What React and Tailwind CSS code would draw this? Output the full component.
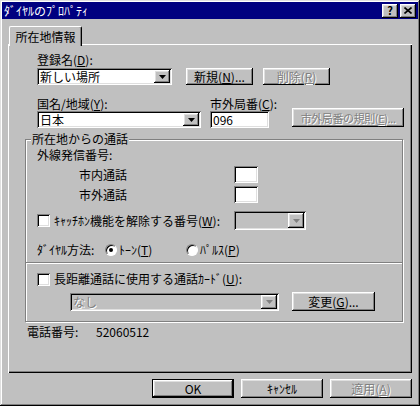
import React from "react";

const raised = "shadow-[inset_-1px_-1px_#000,inset_1px_1px_#fff,inset_-2px_-2px_#808080,inset_2px_2px_#dfdfdf]";
const sunken = "shadow-[inset_1px_1px_#808080,inset_-1px_-1px_#fff,inset_2px_2px_#000,inset_-2px_-2px_#dfdfdf]";
const dim = "text-[#808080] [text-shadow:1px_1px_0_#fff]";

const Arrow = ({ off }) => (
  <svg width="7" height="4" viewBox="0 0 7 4">
    <path d="M0 0h7L3.5 4z" fill={off ? "#808080" : "#000"} />
  </svg>
);

const Combo = ({ className, text, off }) => (
  <div className={`flex items-center p-[2px] ${sunken} ${off ? "bg-[#c0c0c0]" : "bg-white"} ${className}`}>
    <span className={`flex-1 pl-[1px] whitespace-nowrap ${off ? dim : ""}`}>{text}</span>
    <div className={`h-full w-[16px] bg-[#c0c0c0] flex items-center justify-center ${raised}`}>
      <Arrow off={off} />
    </div>
  </div>
);

const Field = ({ className, text }) => (
  <div className={`bg-white flex items-center pl-[3px] ${sunken} ${className}`}>{text}</div>
);

const Btn = ({ className, children, off, def }) => (
  <div
    className={`flex items-center justify-center bg-[#c0c0c0] whitespace-nowrap ${raised} ${off ? dim : ""} ${def ? "border border-black" : ""} ${className}`}
  >
    {children}
  </div>
);

const Check = () => <div className={`w-[13px] h-[13px] bg-white shrink-0 ${sunken}`} />;

const Radio = ({ on }) => (
  <div className="w-[12px] h-[12px] rounded-full bg-white border border-t-[#808080] border-l-[#808080] border-b-white border-r-white shadow-[inset_1px_1px_#000] flex items-center justify-center shrink-0">
    {on && <div className="w-[4px] h-[4px] rounded-full bg-black" />}
  </div>
);

export default function App() {
  return (
    <div className="w-[420px] h-[406px] bg-[#c0c0c0] p-[2px] flex flex-col font-['Noto_Sans_CJK_JP',sans-serif] text-[12px] leading-[14px] text-black shadow-[inset_-1px_-1px_#000,inset_1px_1px_#dfdfdf,inset_-2px_-2px_#808080,inset_2px_2px_#fff]">
      {/* title bar */}
      <div className="h-[17px] shrink-0 bg-[#000080] flex items-center justify-between pl-[2px] pr-[2px]">
        <span className="text-white">ﾀﾞｲﾔﾙのﾌﾟﾛﾊﾟﾃｨ</span>
        <div className="flex gap-[2px]">
          <div className={`w-[16px] h-[14px] bg-[#c0c0c0] flex items-center justify-center font-bold text-[11px] leading-none ${raised}`}>
            ?
          </div>
          <div className={`w-[16px] h-[14px] bg-[#c0c0c0] flex items-center justify-center ${raised}`}>
            <svg width="8" height="7" viewBox="0 0 8 7">
              <path d="M0.5 0.5L7.5 6.5M7.5 0.5L0.5 6.5" stroke="#000" strokeWidth="1.6" />
            </svg>
          </div>
        </div>
      </div>

      {/* tab */}
      <div className="mt-[7px] ml-[7px] relative z-10 -mb-[2px] w-[73px] h-[20px] bg-[#c0c0c0] border-t border-l border-white border-r border-r-black rounded-t-[2px] shadow-[inset_-1px_0_#808080] flex items-center justify-center">
        所在地情報
      </div>

      {/* panel */}
      <div className="ml-[6px] w-[404px] h-[329px] shrink-0 flex flex-col pl-[17px] pt-[9px] shadow-[inset_1px_1px_#fff,inset_-1px_-1px_#000,inset_-2px_-2px_#808080]">
        <div className="ml-[12px]">
          <div>
            登録名(<u>D</u>):
          </div>
          <div className="mt-[1px] flex">
            <Combo className="w-[135px] h-[17px]" text="新しい場所" />
            <Btn className="ml-[14px] w-[67px] h-[17px]">
              新規(<u>N</u>)...
            </Btn>
            <Btn off className="ml-[10px] w-[67px] h-[17px]">
              削除(<u>R</u>)
            </Btn>
          </div>

          <div className="mt-[12px] flex items-start">
            <div className="flex flex-col w-[164px]">
              <span>
                国名/地域(<u>Y</u>):
              </span>
              <Combo className="w-[164px] h-[17px]" text="日本" />
            </div>
            <div className="flex flex-col ml-[9px]">
              <span>
                市外局番(<u>C</u>):
              </span>
              <Field className="w-[59px] h-[17px]" text="096" />
            </div>
            <Btn off className="ml-[15px] mt-[11px] w-[112px] h-[19px] text-[11px] tracking-[-0.4px]">
              市外局番の規則(<u>E</u>)...
            </Btn>
          </div>
        </div>

        {/* group box */}
        <div className="mt-[11px] relative w-[378px] h-[183px] border border-[#808080] shadow-[inset_1px_1px_#fff,1px_1px_#fff] pt-[8px] pl-[11px] flex flex-col">
          <span className="absolute -top-[8px] left-[5px] px-[1px] bg-[#c0c0c0]">所在地からの通話</span>
          <div>外線発信番号:</div>
          <div className="mt-[4px] flex items-center h-[17px]">
            <span className="w-[197px] pl-[42px]">市内通話</span>
            <Field className="w-[24px] h-[17px]" />
          </div>
          <div className="mt-[3px] flex items-center h-[17px]">
            <span className="w-[197px] pl-[42px]">市外通話</span>
            <Field className="w-[24px] h-[17px]" />
          </div>
          <div className="mt-[8px] flex items-center h-[19px]">
            <div className="w-[197px] flex items-center gap-[4px]">
              <Check />
              <span className="whitespace-nowrap">
                ｷｬｯﾁﾎﾝ機能を解除する番号(<u>W</u>):
              </span>
            </div>
            <Combo off className="w-[72px] h-[19px]" text="" />
          </div>
          <div className="mt-[13px] flex items-center h-[14px]">
            <span className="w-[68px]">ﾀﾞｲﾔﾙ方法:</span>
            <div className="w-[81px] flex items-center gap-[2px]">
              <Radio on />
              <span>
                ﾄｰﾝ(<u>T</u>)
              </span>
            </div>
            <div className="flex items-center gap-[2px]">
              <Radio />
              <span>
                ﾊﾟﾙｽ(<u>P</u>)
              </span>
            </div>
          </div>
          <div className="mt-[5px] -ml-[11px] w-[376px] h-[2px] border-t border-[#808080] border-b border-b-white" />
          <div className="mt-[8px] flex items-center gap-[4px] h-[14px]">
            <Check />
            <span className="whitespace-nowrap">
              長距離通話に使用する通話ｶｰﾄﾞ(<u>U</u>):
            </span>
          </div>
          <div className="mt-[6px] flex items-center pl-[33px]">
            <Combo off className="w-[209px] h-[18px]" text="なし" />
            <Btn className="ml-[13px] w-[83px] h-[19px]">
              変更(<u>G</u>)...
            </Btn>
          </div>
        </div>

        <div className="mt-[3px] flex">
          <span className="ml-[2px] w-[69px]">電話番号:</span>
          <span>52060512</span>
        </div>
      </div>

      {/* dialog buttons */}
      <div className="mt-[6px] flex justify-end gap-[7px] pr-[6px]">
        <Btn def className="w-[82px] h-[19px]">
          OK
        </Btn>
        <Btn className="w-[82px] h-[19px]">ｷｬﾝｾﾙ</Btn>
        <Btn off className="w-[82px] h-[19px]">
          適用(<u>A</u>)
        </Btn>
      </div>
    </div>
  );
}
